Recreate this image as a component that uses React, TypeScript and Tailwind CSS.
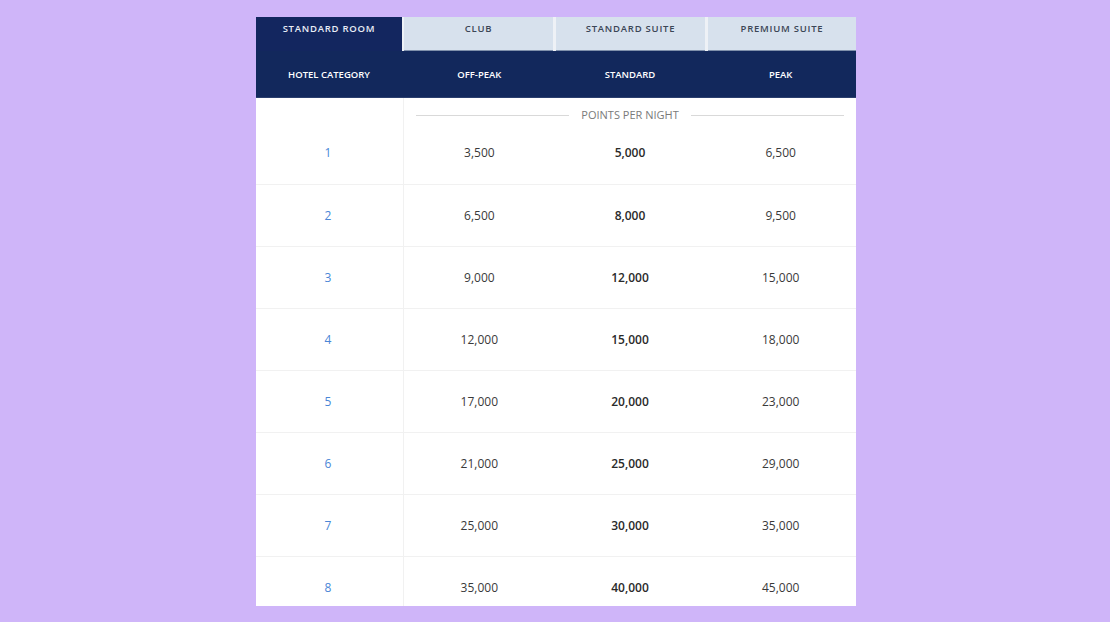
import React from 'react';

const rows = [
    { cat: 1, off: '3,500', std: '5,000', peak: '6,500' },
    { cat: 2, off: '6,500', std: '8,000', peak: '9,500' },
    { cat: 3, off: '9,000', std: '12,000', peak: '15,000' },
    { cat: 4, off: '12,000', std: '15,000', peak: '18,000' },
    { cat: 5, off: '17,000', std: '20,000', peak: '23,000' },
    { cat: 6, off: '21,000', std: '25,000', peak: '29,000' },
    { cat: 7, off: '25,000', std: '30,000', peak: '35,000' },
    { cat: 8, off: '35,000', std: '40,000', peak: '45,000' },
];

const font = { fontFamily: '"Open Sans", "Noto Sans", sans-serif' };

export default function App() {
    return (
        <div className="min-h-[622px] bg-[#cfb5f9] flex justify-center pt-[17px] pl-[2px]" style={font}>
            <div className="w-[600px] h-[589px] overflow-hidden bg-white">
                {/* room type tabs */}
                <div className="flex h-[34px] bg-[#eef1f6]">
                    <div className="w-[146px] bg-[#13265f] text-[#e9edf6] text-[9.5px] font-semibold tracking-[0.08em] flex justify-center pt-[5px]">
                        STANDARD ROOM
                    </div>
                    <div className="w-[149px] ml-[2px] bg-[#d7e1ed] border-b border-[#7f90ab] text-[#3b4656] text-[9.5px] font-semibold tracking-[0.08em] flex justify-center pt-[5px]">
                        CLUB
                    </div>
                    <div className="w-[149px] ml-[3px] bg-[#d7e1ed] border-b border-[#7f90ab] text-[#3b4656] text-[9.5px] font-semibold tracking-[0.08em] flex justify-center pt-[5px]">
                        STANDARD SUITE
                    </div>
                    <div className="w-[148px] ml-[3px] bg-[#d7e1ed] border-b border-[#7f90ab] text-[#3b4656] text-[9.5px] font-semibold tracking-[0.08em] flex justify-center pt-[5px]">
                        PREMIUM SUITE
                    </div>
                </div>

                {/* column headings */}
                <div className="flex h-[47px] bg-[#12285c] text-white text-[9.5px] font-semibold items-center pt-[2px] border-b border-[#2b3f6e]">
                    <div className="w-[148px] text-center pr-[2px]">HOTEL CATEGORY</div>
                    <div className="flex-1 grid grid-cols-3 text-center">
                        <div>OFF-PEAK</div>
                        <div>STANDARD</div>
                        <div>PEAK</div>
                    </div>
                </div>

                {/* body */}
                <div className="flex">
                    <div className="w-[148px] border-r border-[#f1f1f1] h-[24px]" />
                    <div className="flex-1 px-[12px] pt-[10px] flex items-center gap-[12px] h-[24px]">
                        <div className="flex-1 h-px bg-[#d9d9d9]" />
                        <div className="text-[11px] leading-[14px] text-[#7a7a7a]">POINTS PER NIGHT</div>
                        <div className="flex-1 h-px bg-[#d9d9d9]" />
                    </div>
                </div>
                {rows.map((r, i) => (
                    <div key={r.cat} className={`flex h-[62px] items-stretch text-[12px] text-[#3a3a3a] ${i > 0 ? 'border-t border-[#f1f1f1]' : ''}`}>
                        <div className="w-[148px] border-r border-[#f1f1f1] flex items-center justify-center pr-[3px] text-[#4a86d6]">
                            {r.cat}
                        </div>
                        <div className="flex-1 grid grid-cols-3 items-center text-center">
                            <div>{r.off}</div>
                            <div className="font-semibold text-[#2a2a2a]">{r.std}</div>
                            <div>{r.peak}</div>
                        </div>
                    </div>
                ))}
            </div>
        </div>
    );
}
